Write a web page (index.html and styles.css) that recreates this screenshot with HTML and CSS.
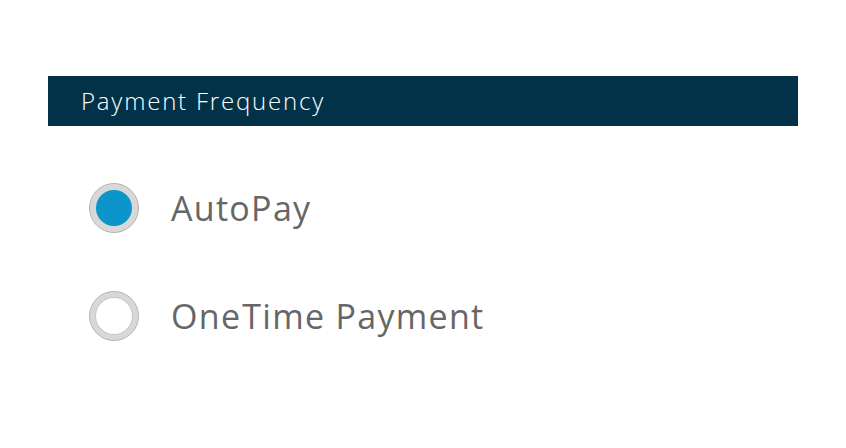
FILE: index.html
```html
<!DOCTYPE html>
<html>
<head>
<meta charset="utf-8">
<link rel="stylesheet" href="styles.css">
</head>
<body>
<div class="panel">
  <div class="header">Payment Frequency</div>
  <div class="options">
    <label class="option">
      <span class="radio checked"></span>
      <span class="label">AutoPay</span>
    </label>
    <label class="option">
      <span class="radio"></span>
      <span class="label">One<span class="tight"></span>Time Payment</span>
    </label>
  </div>
</div>
</body>
</html>
```

FILE: styles.css
```css
html, body {
  margin: 0;
  padding: 0;
  background: #ffffff;
}
body {
  width: 846px;
  height: 448px;
  font-family: "Open Sans", "Liberation Sans", sans-serif;
}
.panel {
  padding: 76px 48px 0 48px;
}
.header {
  height: 50px;
  background: #023247;
  color: #ffffff;
  font-size: 24px;
  font-weight: 300;
  line-height: 50px;
  padding-left: 33px;
  letter-spacing: 1.8px;
}
.options {
  display: flex;
  flex-direction: column;
  gap: 58px;
  padding: 57px 0 0 41px;
}
.option {
  display: flex;
  align-items: center;
  gap: 32px;
  height: 50px;
}
.radio {
  box-sizing: border-box;
  width: 50px;
  height: 50px;
  border-radius: 50%;
  border: 1px solid #b5b5b5;
  background: #d8d8d8;
  display: flex;
  align-items: center;
  justify-content: center;
  flex: none;
}
.radio::after {
  content: "";
  width: 36px;
  height: 36px;
  border-radius: 50%;
  background: #ffffff;
  box-shadow: 0 0 0 1px #c8c8c8;
}
.radio.checked::after {
  background: #0b95cb;
  box-shadow: none;
}
.label {
  font-size: 34px;
  color: #666666;
  font-weight: 400;
  letter-spacing: 1.3px;
}
.tight {
  display: inline-block;
  width: 1px;
}
```
